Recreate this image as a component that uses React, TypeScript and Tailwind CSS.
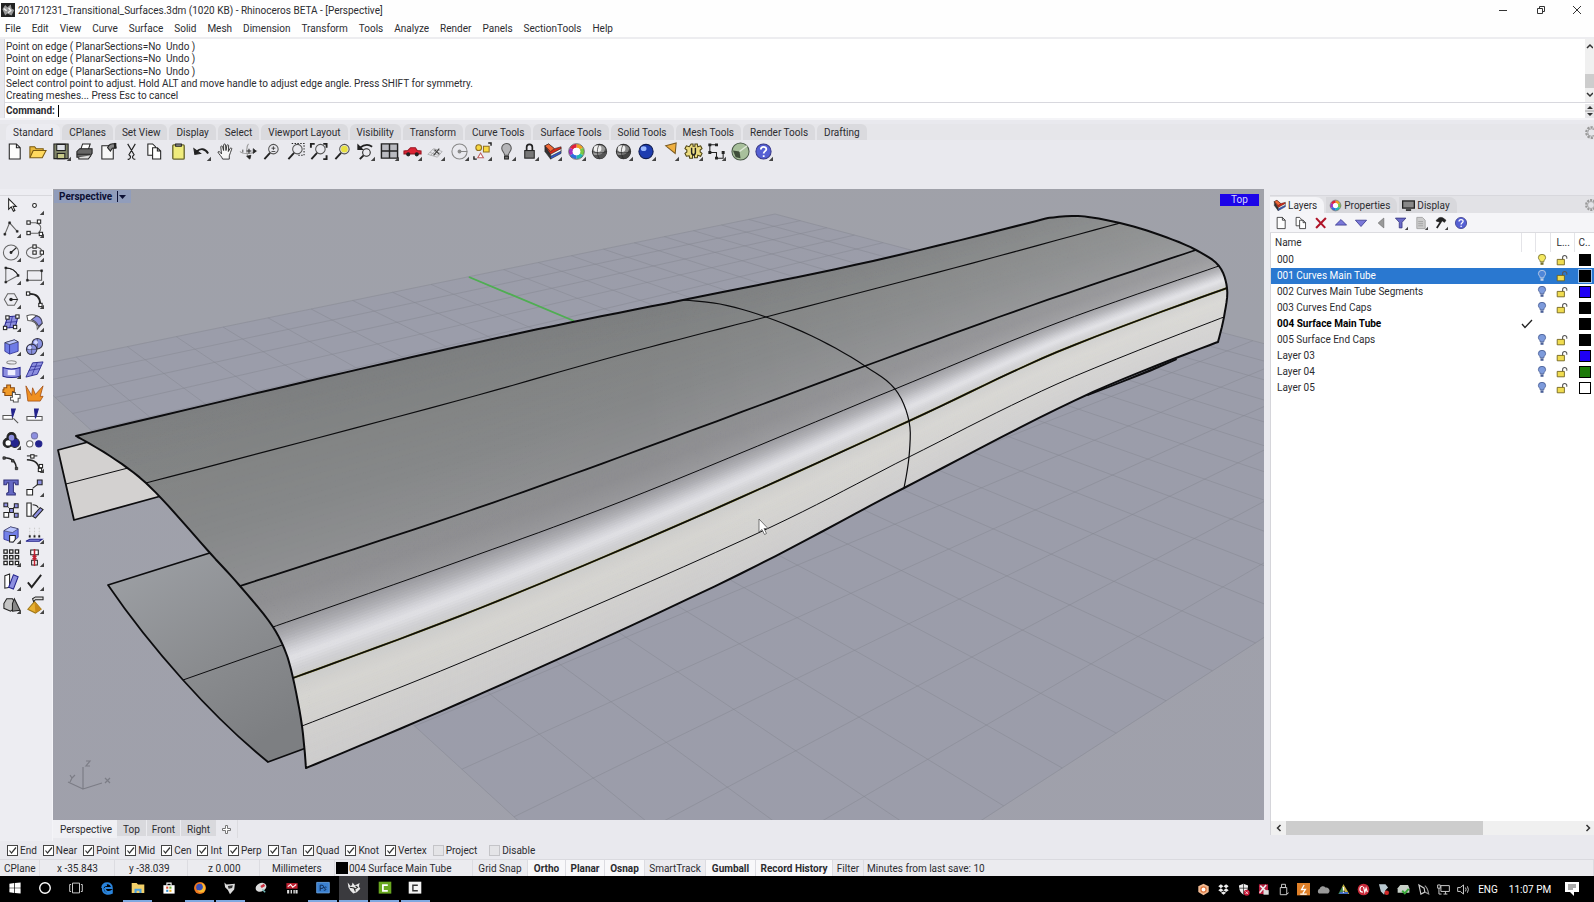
import React from "react";

type Pt = [number, number];
type IconDef = { name: string; art: React.ReactNode; fly?: boolean };

const K = "#222";
const BL = "#8d8fe0";
const DB = "#23238c";

function Icon({ art, fly, size = 20 }: { art: React.ReactNode; fly?: boolean; size?: number }) {
  return (
    <svg width={size} height={size} viewBox="0 0 20 20" fill="none" stroke={K} strokeWidth="1.1" aria-hidden="true">
      {art}
      {fly && <path d="M20 15.5V20h-4.500z" fill="#444" stroke="none" />}
    </svg>
  );
}

const sheet = <path d="M4.500 2h7.500l4 4v12H4.500zM12 2v4h4" fill="#fdfdfd" />;
const copies = (
  <>
    <path d="M3 2h5l3 3v9H3z" fill="#fff" />
    <path d="M8 6h5l3.500 3.500V18H8zM13 6v3.500h3.500" fill="#fff" />
  </>
);
const colorWheel = (
  <g strokeWidth="4">
    <path d="M10 4a6 6 0 0 1 5.200 3" stroke="#f0a020" />
    <path d="M15.200 7a6 6 0 0 1 0 6" stroke="#7ac943" />
    <path d="M15.200 13A6 6 0 0 1 10 16" stroke="#20b8b0" />
    <path d="M10 16a6 6 0 0 1-5.200-3" stroke="#2f6fe0" />
    <path d="M4.800 13a6 6 0 0 1 0-6" stroke="#a030c0" />
    <path d="M4.800 7A6 6 0 0 1 10 4" stroke="#e0203a" />
    <circle cx="10" cy="10" r="8.300" stroke="#444" strokeWidth=".7" />
    <circle cx="10" cy="10" r="4" fill="#fff" stroke="none" />
  </g>
);
const layersArt = (
  <g strokeWidth="0.600">
    <path d="M2 4v6l6 8v-5z" fill="#333" />
    <path d="M8 14l11-5v3L8 18z" fill="#3058c8" />
    <path d="M8 12l11-6v3.500L8 15z" fill="#fff" />
    <path d="M2 4l4-2 6 5 7-2v2L8 13z" fill="#d82818" />
    <path d="M2 4l4-2 6 5-4 3z" fill="#f06a38" />
  </g>
);
const helpArt = (
  <>
    <circle cx="10" cy="10" r="8" fill="#5560d4" stroke="#3a3a8a" />
    <path d="M7.200 8c0-4 5.800-3.600 5.800-.4 0 2-2.800 2-2.800 4.400M10.200 14v1.800" stroke="#fff" strokeWidth="1.900" />
  </>
);
const magnifier = (
  <>
    <circle cx="12" cy="7.500" r="5" stroke="#555" />
    <path d="M8.500 11.500L2.500 18" strokeWidth="2" />
  </>
);

const sphere = (dark: string, light: string) => (
  <>
    <circle cx="10" cy="10" r="7.500" fill={light} stroke="#333" />
    <path d="M10 17.500a7.500 7.500 0 0 0 6-12c0 6-5 9-12.500 8a7.500 7.500 0 0 0 6.500 4z" fill={dark} stroke="none" />
    <ellipse cx="8" cy="7" rx="4" ry="3.500" fill="#fff" opacity=".85" stroke="none" />
    <path d="M10 2.500c-3 4-3 11 0 15M2.500 10c4 2 11 2 15 0" strokeWidth=".7" />
  </>
);

const toolbar: IconDef[] = [
  { name: "New", art: sheet },
  {
    name: "Open",
    art: (
      <>
        <path d="M2 16V5h5l1.500 2H16v3" fill="#e9b93c" stroke="#7a5a10" />
        <path d="M2 16.500L5.500 9H19l-4 7.500z" fill="#ffd95e" stroke="#7a5a10" />
      </>
    ),
  },
  {
    name: "Save",
    fly: true,
    art: (
      <>
        <path d="M2 2h15v15.500H2z" fill="#7f8468" />
        <path d="M5 2.500h9V9H5z" fill="#dfe2e8" />
        <path d="M5.500 12h8v5.500h-8z" fill="#c8cb8a" />
      </>
    ),
  },
  {
    name: "Print",
    art: (
      <>
        <path d="M6 8l2-6h8l-2 6" fill="#fff" />
        <path d="M2 10l3-3h13v5l-3 4H2z" fill="#666" />
        <path d="M2 13h14M4 16v2h10l3-4" fill="#ddd" />
      </>
    ),
  },
  {
    name: "Document properties",
    art: (
      <>
        <path d="M3 4h12v14H3z" fill="#f8f8f8" />
        <path d="M9 6c2-5 5-4 8-4l1 4-4 .5-2 3z" fill="#888" />
        <path d="M17 1v6" strokeWidth="2.500" />
      </>
    ),
  },
  { name: "Cut", art: <path d="M6 2l7 12M14 2L7 14M6 18a2 2 0 1 0 1.500-4M14 18a2 2 0 1 1-1.500-4" strokeWidth="1.200" /> },
  { name: "Copy", art: copies },
  {
    name: "Paste",
    art: (
      <>
        <rect x="4" y="3" width="12" height="15" rx="1" fill="#f0ec7c" stroke="#66642c" strokeWidth="1.400" />
        <path d="M7 4.500V2h6v2.500z" fill="#999" />
      </>
    ),
  },
  { name: "Undo", fly: true, art: <><path d="M5 10c4-4 9-3 12 2" strokeWidth="2" /><path d="M2 7l1 6 6-1z" fill={K} /></> },
  {
    name: "Pan",
    art: (
      <path
        d="M7 18c-1-3-4-5-5-7.500 1-1.200 2.300 0 3.800 2L5 5c.3-1.200 1.700-1 2 .2L8 9V3c.3-1.200 1.900-1.200 2 0l.5 6 1-5.500c.4-1 1.800-.8 1.800.4L13 10l2-3.500c.8-.8 1.900 0 1.500 1-1 3-1.500 4-2.500 7V18z"
        fill="#f6f6f6"
        strokeWidth=".9"
      />
    ),
  },
  {
    name: "Rotate view",
    art: (
      <>
        <path d="M1 10c3 3 14 3 18-1M10 2c-3 3-2 13 1 16" stroke="#999" />
        <path d="M4 8v3M15 7l3 2.500-3 2.500zM8 15l3.500 3 1-4z" fill={K} strokeWidth=".8" />
        <path d="M8 9.500h5M10.500 7v5" />
      </>
    ),
  },
  { name: "Zoom dynamic", art: <>{magnifier}<path d="M10 6.500h4M12 4.500v4M10 10h4" strokeWidth=".8" /></> },
  { name: "Zoom window", art: <>{magnifier}<path d="M6 1.500h13V14h-6" strokeDasharray="1.500 1.500" /></> },
  { name: "Zoom extents", art: <>{magnifier}<path d="M2 6V2h4M15 2h3.500v4M18.500 14v4H15" strokeWidth="2" /></> },
  {
    name: "Zoom selected",
    art: (
      <>
        {magnifier}
        <circle cx="12" cy="7.500" r="3.500" fill="#e8e040" stroke="none" />
      </>
    ),
  },
  {
    name: "Undo view change",
    fly: true,
    art: (
      <>
        <circle cx="11" cy="11" r="4" />
        <path d="M8 14l-4 4" strokeWidth="2" />
        <path d="M4 6c4-3 9-4 13-1" strokeWidth="1.800" />
        <path d="M2 3v5h5z" fill={K} />
      </>
    ),
  },
  {
    name: "Four viewports",
    fly: true,
    art: <path d="M1.500 2h17v15h-17zM10 2v15M1.500 9.500h17" fill="#b9bac0" strokeWidth="1.500" />,
  },
  {
    name: "Named views",
    fly: true,
    art: (
      <>
        <path d="M1 12.500V9.500L5 9l3-3h5l2 3 4 .5v3z" fill="#dc2434" stroke="#9a1824" />
        <circle cx="5.500" cy="13" r="1.600" fill={K} />
        <circle cx="14.500" cy="13" r="1.600" fill={K} />
      </>
    ),
  },
  {
    name: "Construction planes",
    fly: true,
    art: (
      <g stroke="#999">
        <path d="M2 13l6-6 9 3-5 6zM4 11l9 3M7 8l8 4M5 14l6-6" strokeWidth=".7" />
        <path d="M8 14l6-7M9 8l5 5" stroke="#444" strokeWidth="1.300" />
      </g>
    ),
  },
  {
    name: "Object snap",
    fly: true,
    art: (
      <g stroke="#888">
        <circle cx="10" cy="10" r="8" />
        <path d="M10 10h8" />
        <circle cx="10" cy="10" r="1.500" fill="#888" />
      </g>
    ),
  },
  {
    name: "Select objects",
    fly: true,
    art: (
      <>
        <circle cx="6" cy="6" r="3" fill="#f8d840" stroke="#907020" />
        <path d="M11 4.500h6v6h-6z" fill="#f8d840" stroke="#907020" />
        <path d="M8 11.500l3 5H5z" fill="#fff" stroke="#c06060" />
        <path d="M16 1h3v3M1 15v3h3" strokeWidth="1.500" />
      </>
    ),
  },
  {
    name: "Hide objects",
    fly: true,
    art: (
      <>
        <path d="M8 14c0-3-3-4-3-7.500a5 5 0 0 1 10 0C15 10 12 11 12 14z" fill="#b5b5b8" stroke="#555" />
        <path d="M8 15h4v3H8z" fill="#777" />
      </>
    ),
  },
  {
    name: "Lock objects",
    fly: true,
    art: (
      <>
        <path d="M7 9V5.500a3 3 0 0 1 6 0V9" strokeWidth="1.800" />
        <rect x="5" y="9" width="10" height="8" fill="#777" />
      </>
    ),
  },
  { name: "Layers", fly: true, art: layersArt },
  { name: "Object properties", fly: true, art: colorWheel },
  { name: "Shaded display", art: sphere("#555", "#999") },
  { name: "Render", fly: true, art: sphere("#444", "#888") },
  {
    name: "Render preview",
    fly: true,
    art: (
      <>
        <circle cx="9.500" cy="10" r="7.500" fill="#1d3cb0" stroke="#101c50" />
        <ellipse cx="7" cy="7" rx="3" ry="2.500" fill="#9ab8ff" stroke="none" />
      </>
    ),
  },
  { name: "Spotlight", fly: true, art: <path d="M6 4l11-3-1 11z" fill="#f0b040" stroke="#7a5a20" /> },
  {
    name: "Options",
    fly: true,
    art: (
      <>
        <path
          d="M7.500 2h2v2.500h2V2h2.500l.5 3 3-1 1.500 3-2 1.500v2l2 1.500-1.500 3-3-1-.5 2.500h-3v-2.500h-2V17H6l-.5-2.500-3 .5L1 12l2-1.500v-2L1 7l1.500-3 3 1z"
          fill="#ecdc80"
          stroke="#4a4010"
        />
        <path d="M8 6v5c0 3 4 3 4 0V6" strokeWidth="1.500" />
      </>
    ),
  },
  {
    name: "Record history",
    fly: true,
    art: (
      <>
        <path d="M3 3h7M3 3v8h7v6h7v-5" />
        <path d="M2 2h2v2H2zM9 2h2v2H9zM2 10h2v2H2zM9 16h2v2H9zM16 10h2v2h-2z" fill={K} />
      </>
    ),
  },
  {
    name: "Grasshopper",
    art: (
      <>
        <circle cx="10" cy="10" r="9" fill="#a8c09c" stroke="#4a5a48" />
        <path d="M2 9l7 1 1 7-5-1z" fill="#3f4e3a" stroke="none" />
        <path d="M9 10l8-6" stroke="#dfe8d8" strokeWidth="1.500" />
      </>
    ),
  },
  { name: "Help topics", fly: true, art: helpArt },
];

const sq = (x: number, y: number, f = "#fff") => <rect x={x} y={y} width="3.500" height="3.500" fill={f} />;

const sideTools: IconDef[] = [
  { name: "Select", art: <path d="M7 3v11l2.700-2.500L12 16l1.600-.8-2-4.300H15z" fill="#fff" /> },
  { name: "Point", fly: true, art: <circle cx="10" cy="10" r="2" fill="#fff" /> },
  { name: "Polyline", fly: true, art: <><path d="M3 16L8 4l8 9" stroke="#666" /><path d="M2 15h2v2H2zM7 3h2v2H7zM15 12h2v2h-2z" fill={K} strokeWidth=".5" /></> },
  { name: "Curve", fly: true, art: <><path d="M4 4h7c8 2 6 8 3 11H4" stroke="#666" />{sq(2, 2)}{sq(13, 1)}{sq(2, 13)}{sq(15, 14)}</> },
  { name: "Circle", fly: true, art: <><circle cx="9.500" cy="10" r="8" stroke="#666" /><path d="M9.500 10l5.500-5" /><circle cx="9.500" cy="10" r="1" fill={K} /></> },
  { name: "Ellipse", fly: true, art: <><ellipse cx="10" cy="10" rx="8.500" ry="6" stroke="#666" />{sq(8.3, 2)}{sq(8.3, 8.3)}{sq(16, 8.3)}</> },
  { name: "Arc", fly: true, art: <><path d="M4 2v15l13-7C14 4 9 2 4 2z" stroke="#666" /><path d="M4 2c5 0 10 2 13 8" /><path d="M3 1h2v2H3zM16 9h2v2h-2zM3 16h2v2H3z" fill={K} strokeWidth=".5" /></> },
  { name: "Rectangle", fly: true, art: <><path d="M2.500 5h15v10h-15z" stroke="#555" /><path d="M1.500 14h2v2h-2zM16.500 4h2v2h-2z" fill={K} strokeWidth=".5" /></> },
  { name: "Polygon", fly: true, art: <><path d="M2.500 10L6 4h7l3.500 6L13 16H6z" stroke="#666" /><path d="M9.500 10h7" /><circle cx="9.500" cy="10" r="1.300" fill={K} /></> },
  { name: "Fillet curves", fly: true, art: <><path d="M5 4c8 0 11 4 11 11" strokeWidth="1.800" />{sq(1.5, 2)}{sq(14.5, 14)}</> },
  { name: "Surface from points", fly: true, art: <><path d="M6 4l11-1-3 12-12 1z" fill={BL} stroke={DB} /><path d="M4 10l12-1M11 3.500L8 16" stroke={DB} strokeWidth=".7" />{sq(4, 3)}{sq(14.5, 2)}{sq(1.5, 14)}{sq(12, 13)}</> },
  { name: "Sweep", fly: true, art: <><path d="M2 3c7-3 15 0 16 8l-5 6c0-6-4-9-10-9z" fill="#fff" stroke="#555" /><path d="M7 7l5-4c4 1 6 4 6 8l-4 3c-1-3-3-6-7-7z" fill={BL} stroke="#445" /></> },
  { name: "Box", fly: true, art: <><path d="M3 6l10-3 4 2v10l-9 3-5-3z" fill="#6f7ce6" stroke={DB} strokeWidth=".8" /><path d="M3 6l5 2 9-3-4-2z" fill="#b9c4ff" strokeWidth=".6" /><path d="M8 8v10" stroke={DB} strokeWidth=".8" /></> },
  { name: "Boolean union", fly: true, art: <g fill="#8a92e0" stroke="#334"><circle cx="13" cy="7" r="5.500" /><circle cx="7" cy="13" r="5.500" /><path d="M7 7.500v11M1.500 13h11M13 2v10" strokeWidth=".6" /><circle cx="11.500" cy="5.500" r="2" fill="#d4daff" stroke="none" /><circle cx="5" cy="11" r="2" fill="#d4daff" stroke="none" /></g> },
  { name: "Revolve", fly: true, art: <><ellipse cx="10" cy="2.500" rx="5" ry="1.800" stroke="#888" /><path d="M1 8c5 2 13 2 18 0v9c-5 2-13 2-18 0z" fill={BL} stroke={DB} /><path d="M6 10.500h8V16H6z" fill="#eef" stroke="none" /></> },
  { name: "Surface grid", fly: true, art: <><path d="M8 3l11-1-6 13-12 3z" fill={BL} stroke={DB} strokeWidth=".9" /><path d="M4 11l12-2M13 2.500L7 16.500M6 7l11-1" stroke={DB} strokeWidth=".7" /></> },
  { name: "Join", art: <><path d="M2 4h3V1h4v3h4v4h-2v4H3V9H1V6h1z" fill="#f09a28" stroke="#8a4a10" /><path d="M11 9h3v2h5v4h-2v4h-5v-2H9v-3h2z" fill="#fff" stroke="#555" /></> },
  { name: "Explode", art: <path d="M1 2l6 10 1-8 3 7 8-9-3 11h3l-3 5H3z" fill="#f09020" stroke="#a04a10" strokeWidth=".8" /> },
  { name: "Trim", art: <><path d="M1 9h10v4H1zM12 12l5 5" fill="#fff" stroke="#555" /><path d="M10 2h4l-3 9z" fill={DB} stroke={DB} /></> },
  { name: "Split", art: <><path d="M2 10h16v4H2z" fill="#fff" stroke="#555" /><path d="M10 2h4l-3 10z" fill={DB} stroke={DB} /></> },
  { name: "Group", fly: true, art: <><circle cx="10" cy="6.500" r="4.800" fill={K} /><circle cx="6" cy="12.500" r="4.800" fill={K} /><circle cx="13.500" cy="12.500" r="4.800" fill={DB} /><circle cx="10" cy="7" r="3" fill={BL} stroke="none" /><circle cx="6.500" cy="12.500" r="2.800" fill="#fff" stroke="none" /></> },
  { name: "Ungroup", art: <><circle cx="10" cy="5" r="3.300" fill={BL} stroke="#77a" /><circle cx="5" cy="13.500" r="3.300" fill="#fff" stroke="#666" /><circle cx="14.500" cy="13.500" r="3.300" fill={DB} stroke={DB} /></> },
  { name: "Edit points", art: <><path d="M2 4c9 0 13 4 13 12" strokeWidth="1.500" /><path d="M1 3h2.500v2.500H1zM10 6h2.500v2.500H10zM14 14h2.500v2.500H14z" fill="#555" strokeWidth=".8" /></> },
  { name: "Handle editor", fly: true, art: <><path d="M2 6c9 0 13 4 13 12" strokeWidth="1.500" /><path d="M2 2h11" />{sq(6, 0.8)}{sq(15, 11)}{sq(14, 15)}</> },
  { name: "Text", art: <path d="M2 2h15v5h-2.500l-1-2H12v10l2 1v2H5v-2l2-1V5H5.500l-1 2H2z" fill="#6468c4" stroke="#33337a" /> },
  { name: "Move", fly: true, art: <><path d="M2 12h6v6H2z" fill="#fff" /><path d="M13 2h5v5h-5z" fill={BL} /><path d="M8 11l5-4" /></> },
  { name: "Copy objects", art: <><path d="M4 4l10 10M14 5L5 14" strokeWidth=".7" /><path d="M2 2h4v4H2zM13 3h4v4h-4zM8 8h4v4H8zM13 13h4v4h-4z" fill={BL} /><path d="M2 12h5v5H2z" fill="#fff" /></> },
  { name: "Rotate", art: <><path d="M2 2h4.500v14H2z" fill="#fff" /><path d="M16 7l3 2-8 9-3-2z" fill={BL} /><path d="M8 4c3 0 5 1 6 3" /></> },
  { name: "Solid fillet", fly: true, art: <><path d="M2 6l7-4 8 2v9l-6 5-9-3z" fill="#7380e8" stroke={DB} strokeWidth=".8" /><path d="M2 6l7-4 8 2-6 4z" fill="#b9c4ff" strokeWidth=".5" /><path d="M8 11h6v4l-2 3H8z" fill="#fff" /></> },
  { name: "Project", fly: true, art: <><path d="M5 3v9M10 3v9M15 3v9" stroke="#ccc" strokeDasharray="1.500 1.500" /><path d="M4 12h2M9 12h2M14 12h2" strokeWidth="2.500" /><path d="M1 17l4-2h13l-3 2z" fill={BL} stroke={DB} /></> },
  { name: "Array", fly: true, art: <>{[2, 8, 14].map((y) => [2, 8, 14].map((x) => <rect key={`${x}-${y}`} x={x} y={y} width="3.500" height="3.500" fill="#fff" strokeWidth="1.300" />))}</> },
  { name: "Mirror", fly: true, art: <><path d="M6 2h8v5H6zM7 13h6v5H7z" fill="#fff" /><path d="M10 1v18M8 8l4 4M12 8l-4 4" stroke="#c02030" strokeWidth="1.600" /></> },
  { name: "Layout", fly: true, art: <><path d="M3 4l5-2v14l-5 1z" fill="#fff" /><path d="M12 3l5 2-5 13-5-2z" fill={BL} stroke={DB} /></> },
  { name: "Check", fly: true, art: <path d="M3 11l4 5L17 3" strokeWidth="2" /> },
  { name: "Solids", fly: true, art: <><path d="M2 9l3-5h6l2 3v7l-4 3-7-3z" fill="#c4c4c4" /><path d="M13 4l6 12-8 1V9z" fill="#888" /></> },
  { name: "Analyze", fly: true, art: <><path d="M3 15l7-8 7 8-6 4z" fill="#e8b030" stroke="#a07818" /><path d="M10 7l1 12 6-4z" fill="#c88a18" stroke="none" /><path d="M8 4l3-2h8v3h-8l-2 2z" fill="#ddd" /></> },
];

const menus = ["File", "Edit", "View", "Curve", "Surface", "Solid", "Mesh", "Dimension", "Transform", "Tools", "Analyze", "Render", "Panels", "SectionTools", "Help"];
const toolTabs = ["Standard", "CPlanes", "Set View", "Display", "Select", "Viewport Layout", "Visibility", "Transform", "Curve Tools", "Surface Tools", "Solid Tools", "Mesh Tools", "Render Tools", "Drafting"];
const history = [
  "Point on edge ( PlanarSections=No  Undo )",
  "Point on edge ( PlanarSections=No  Undo )",
  "Point on edge ( PlanarSections=No  Undo )",
  "Select control point to adjust. Hold ALT and move handle to adjust edge angle. Press SHIFT for symmetry.",
  "Creating meshes... Press Esc to cancel",
];

/* ---------- Perspective viewport ---------- */

const isoCurves: Pt[][] = [
  [[76, 436], [300, 383], [520, 333], [683, 300], [873, 261], [1048, 218]],
  [[146, 483], [460, 400], [620, 355], [766, 317], [954, 268], [1120, 223]],
  [[240, 586], [460, 514], [620, 457], [865, 366], [1030, 306], [1196, 250]],
  [[273, 627], [460, 561], [620, 502], [895, 389], [1057, 323], [1219, 266]],
  [[293, 678], [460, 616], [669, 529], [909, 421], [1057, 352], [1227, 288]],
  [[302, 726], [460, 663], [771, 527], [909, 457], [1057, 384], [1224, 317]],
  [[306, 768], [460, 703], [740, 574], [904, 488], [1093, 392], [1218, 342]],
];

function smooth(points: Pt[], steps = 10): Pt[] {
  const out: Pt[] = [];
  for (let i = 0; i < points.length - 1; i++) {
    const p0 = points[Math.max(0, i - 1)];
    const p1 = points[i];
    const p2 = points[i + 1];
    const p3 = points[Math.min(points.length - 1, i + 2)];
    const d = (a: Pt, b: Pt) => Math.sqrt(Math.hypot(a[0] - b[0], a[1] - b[1])) || 1e-3;
    const t1 = d(p0, p1);
    const t2 = t1 + d(p1, p2);
    const t3 = t2 + d(p2, p3);
    for (let s = 0; s < steps; s++) {
      const t = t1 + ((t2 - t1) * s) / steps;
      const c = (k: 0 | 1) => {
        const a1 = ((t1 - t) * p0[k] + t * p1[k]) / t1;
        const a2 = ((t2 - t) * p1[k] + (t - t1) * p2[k]) / (t2 - t1);
        const a3 = ((t3 - t) * p2[k] + (t - t2) * p3[k]) / (t3 - t2);
        const b1 = ((t2 - t) * a1 + t * a2) / t2;
        const b2 = ((t3 - t) * a2 + (t - t1) * a3) / (t3 - t1);
        return ((t2 - t) * b1 + (t - t1) * b2) / (t2 - t1);
      };
      out.push([c(0), c(1)]);
    }
  }
  out.push(points[points.length - 1]);
  return out;
}

const curves = isoCurves.map((c) => smooth(c));
const toPath = (p: Pt[]) => "M" + p.map(([x, y]) => `${x.toFixed(1)} ${y.toFixed(1)}`).join("L");

const extend = (p: Pt[]): Pt[] => {
  const a = p[0];
  const b = p[1];
  const y = p[p.length - 2];
  const z = p[p.length - 1];
  return [[a[0] - (b[0] - a[0]), a[1] - (b[1] - a[1])], ...p, [z[0] + 2 * (z[0] - y[0]), z[1] + 2 * (z[1] - y[1])]];
};

const shade: [number, number[]][] = [
  [0, [122, 124, 125]],
  [1, [127, 129, 129]],
  [1.5, [131, 133, 134]],
  [2, [139, 140, 142]],
  [2.5, [140, 140, 143]],
  [3, [150, 150, 154]],
  [3.25, [174, 174, 179]],
  [3.5, [210, 210, 215]],
  [3.65, [224, 224, 228]],
  [3.85, [208, 208, 211]],
  [4, [203, 203, 202]],
  [4.4, [213, 212, 208]],
  [5, [209, 208, 206]],
  [6, [204, 203, 203]],
];

function shadeAt(v: number) {
  let i = 0;
  while (i < shade.length - 2 && v > shade[i + 1][0]) i++;
  const [a, ca] = shade[i];
  const [b, cb] = shade[i + 1];
  const f = (v - a) / (b - a);
  return `rgb(${ca.map((c, k) => Math.round(c + (cb[k] - c) * f)).join(",")})`;
}

const strips = (() => {
  const out: { d: string; fill: string }[] = [];
  const n = 20;
  const wide = curves.map(extend);
  for (let k = 0; k < 6; k++) {
    for (let s = 0; s < n; s++) {
      const row = (f: number): Pt[] =>
        wide[k].map((p, i): Pt => [p[0] + (wide[k + 1][i][0] - p[0]) * f, p[1] + (wide[k + 1][i][1] - p[1]) * f]);
      out.push({ d: toPath([...row(s / n), ...row((s + 1) / n).reverse()]) + "Z", fill: shadeAt(k + (s + 0.5) / n) });
    }
  }
  return out;
})();

const gridPath = (() => {
  const [p0, p1, p2, p3]: Pt[] = [[23, 368], [775, 214], [1586, 429], [710, 996]];
  const dx1 = p1[0] - p2[0], dx2 = p3[0] - p2[0], sx = p0[0] - p1[0] + p2[0] - p3[0];
  const dy1 = p1[1] - p2[1], dy2 = p3[1] - p2[1], sy = p0[1] - p1[1] + p2[1] - p3[1];
  const den = dx1 * dy2 - dx2 * dy1;
  const g = (sx * dy2 - dx2 * sy) / den;
  const h = (dx1 * sy - sx * dy1) / den;
  const map = (u: number, v: number) => {
    const w = g * u + h * v + 1;
    const x = ((p1[0] - p0[0] + g * p1[0]) * u + (p3[0] - p0[0] + h * p3[0]) * v + p0[0]) / w;
    const y = ((p1[1] - p0[1] + g * p1[1]) * u + (p3[1] - p0[1] + h * p3[1]) * v + p0[1]) / w;
    return `${x.toFixed(1)} ${y.toFixed(1)}`;
  };
  let d = "";
  for (let i = 0; i <= 20; i++) d += `M${map(i / 20, 0)}L${map(i / 20, 1)}M${map(0, i / 20)}L${map(1, i / 20)}`;
  return d;
})();

const frontProfile = smooth([[76, 436], [110, 456], [146, 483], [210, 553], [240, 586], [273, 627], [286, 653], [293, 678], [302, 726], [306, 768]], 6);
const rearProfile = smooth([[1048, 218], [1078, 216], [1120, 223], [1160, 235], [1196, 250], [1219, 266], [1227, 288], [1224, 317], [1218, 342]], 6);
const section = smooth([[683, 300], [720, 304], [766, 317], [820, 340], [865, 366], [895, 389], [909, 421], [909, 457], [904, 488]], 6);
const outline = toPath([...curves[0], ...rearProfile, ...[...curves[6]].reverse(), ...[...frontProfile].reverse()]) + "Z";

function Scene() {
  return (
    <svg className="block h-full w-full" viewBox="53 189 1211 631" preserveAspectRatio="xMidYMid slice" role="img" aria-label="Perspective view of the main tube surface">
      <defs>
        <linearGradient id="sky" x1="0" y1="0" x2="0" y2="1">
          <stop offset="0" stopColor="#a1a1a6" />
          <stop offset=".3" stopColor="#9fa1aa" />
          <stop offset="1" stopColor="#a0a0ac" />
        </linearGradient>
        <linearGradient id="flap" x1="0" y1="0" x2=".6" y2="1">
          <stop offset="0" stopColor="#9fa2a7" />
          <stop offset=".6" stopColor="#8a8c8f" />
          <stop offset="1" stopColor="#7d7f82" />
        </linearGradient>
        <linearGradient id="far" x1="0" y1="0" x2="1" y2="0">
          <stop offset="0" stopColor="#fff" stopOpacity=".03" />
          <stop offset=".5" stopColor="#fff" stopOpacity=".02" />
          <stop offset="1" stopColor="#fff" stopOpacity=".14" />
        </linearGradient>
        <clipPath id="tube">
          <path d={outline} />
        </clipPath>
      </defs>
      <path d="M-400-100h2100v1400H-400z" fill="url(#sky)" />
      <path d="M23 368L775 214 1586 429 710 996z" fill="#9799a9" fillOpacity=".4" />
      <path d={gridPath} stroke="#858792" strokeOpacity=".5" strokeWidth="1" fill="none" />
      <path d="M469 277L574 321" stroke="#4fae52" strokeWidth="1.800" />
      <g stroke="#0c0c0e" strokeWidth="1.800" strokeLinejoin="round">
        <path d="M92 441L58 450 74 520 161 496 170 479z" fill="#d3d1d0" />
        <path d="M66 484L128 468" strokeWidth="1" />
        <path d="M216 551L108 585Q140 632 183 680T268 762L306 748 310 690 290 620z" fill="url(#flap)" />
        <path d="M183 680L285 644" strokeWidth="1" />
        <path d="M1088 395L1120 382.500 1176 359.500 1150 371z" fill="#0c0c0e" />
      </g>
      <g clipPath="url(#tube)">
        {strips.map((s, i) => (
          <path key={i} d={s.d} fill={s.fill} stroke={s.fill} strokeWidth="1" />
        ))}
        <path d={outline} fill="url(#far)" />
      </g>
      <g fill="none" stroke="#0c0c0e" strokeLinejoin="round">
        <path d={toPath(curves[1])} strokeWidth="1.100" />
        <path d={toPath(curves[2])} strokeWidth="1.800" />
        <path d={toPath(curves[3])} strokeWidth="1" />
        <path d={toPath(curves[4])} stroke="#6e6a10" strokeWidth="2" />
        <path d={toPath(curves[4])} strokeWidth="1.500" />
        <path d={toPath(curves[5])} strokeWidth="1" />
        <path d={toPath(section)} strokeWidth="1.200" />
        <path d={outline} strokeWidth="2" />
      </g>
      <g stroke="#7c7d86" strokeWidth="1.200" fill="none">
        <path d="M83 767v22l19-6M83 789l-15-7" />
        <path d="M86 761h4l-4 5h4M105 778l5 5M110 778l-5 5M70 775l2 3 3-3M72 778l-2 4" />
      </g>
      <path d="M759 519v13l3-2.500 2.500 5 2-1-2.500-5h4z" fill="#fff" stroke="#555" strokeWidth=".8" />
    </svg>
  );
}

/* ---------- Layers panel ---------- */

type Layer = { name: string; color: string; on?: boolean; selected?: boolean; current?: boolean };
const layers: Layer[] = [
  { name: "000", color: "bg-black", on: true },
  { name: "001 Curves Main Tube", color: "bg-black", selected: true },
  { name: "002 Curves Main Tube Segments", color: "bg-[#1f00f5]" },
  { name: "003 Curves End Caps", color: "bg-black" },
  { name: "004 Surface Main Tube", color: "bg-black", current: true },
  { name: "005 Surface End Caps", color: "bg-black" },
  { name: "Layer 03", color: "bg-[#1f00f5]" },
  { name: "Layer 04", color: "bg-[#1c7a08]" },
  { name: "Layer 05", color: "bg-white" },
];

const layerTools: IconDef[] = [
  { name: "New layer", art: sheet },
  { name: "New sublayer", art: copies },
  { name: "Delete layer", art: <path d="M3 3l13 14M17 3L3 17" stroke="#b01428" strokeWidth="3" /> },
  { name: "Move up", art: <path d="M2 13l8-8 8 8z" fill="#7a78d8" stroke="#33338c" /> },
  { name: "Move down", art: <path d="M2 6l8 9 8-9z" fill="#7a78d8" stroke="#33338c" /> },
  { name: "Move to parent", art: <path d="M14 3v14l-8-7z" fill="#999" stroke="#777" /> },
  { name: "Filter", fly: true, art: <path d="M2 3h15l-5.500 6v8h-4V9z" fill="#6a6ac8" stroke="#33337c" /> },
  { name: "Layer state", fly: true, art: <path d="M4 2h8l4 4v12H4zM6 8h7M6 11h7M6 14h7" fill="#ccc" stroke="#999" /> },
  { name: "Tools", fly: true, art: <><path d="M3 7c3-5 7-6 10-4l4 3-2 3-3-2-3 2z" fill={K} /><path d="M10 8l-6 9" strokeWidth="2.500" /></> },
  { name: "Layer help", art: helpArt },
];

const bulbArt = (fill: string, line: string) => (
  <>
    <path d="M7 13c0-3-3-4-3-7a6 5.500 0 0 1 12 0c0 3-3 4-3 7z" fill={fill} stroke={line} strokeWidth="1.500" />
    <path d="M7.500 14h5v4h-5z" fill={line} stroke="none" />
  </>
);
const lockArt = (
  <>
    <path d="M11 9V6a3.500 3.500 0 0 1 7 0v2" stroke="#555" strokeWidth="1.800" />
    <path d="M2 9h12v9H2z" fill="#f0dc50" stroke="#6a5c18" strokeWidth="1.400" />
  </>
);

const panelTabs = [
  { name: "Layers", art: layersArt },
  { name: "Properties", art: colorWheel },
  { name: "Display", art: <><rect x="1" y="3" width="18" height="11" fill="#888" strokeWidth="2" /><path d="M6 17h8" strokeWidth="2.500" /></> },
];

const gearArt = (
  <g stroke="#999">
    <circle cx="10" cy="10" r="7" strokeWidth="3" strokeDasharray="3 1.400" />
    <circle cx="10" cy="10" r="5" />
  </g>
);

function LayersPanel() {
  return (
    <aside className="flex w-[324px] shrink-0 flex-col pt-[6px] pb-[6px]" aria-label="Layers">
      <div className="flex h-[18px] items-end border-t border-[#d8d8dd] bg-[#e2e2e6]">
        {panelTabs.map((t, i) => (
          <button key={t.name} className={`flex h-[16px] items-center gap-[2px] rounded-tr-[8px] pr-[7px] pl-[3px] ${i === 0 ? "bg-[#f4f4f7]" : "bg-[#d8d8dc]"} mr-[2px]`}>
            <Icon art={t.art} size={13} />
            {t.name}
          </button>
        ))}
        <button className="ml-auto h-4 w-[10px] overflow-hidden" aria-label="Panel options">
          <Icon art={gearArt} size={14} />
        </button>
      </div>
      <div className="flex h-[20px] items-center gap-[6px] border-b border-[#dcdce0] bg-[#f5f5f8] pl-[4px]">
        {layerTools.map((t) => (
          <button key={t.name} aria-label={t.name} className="w-[14px]">
            <Icon art={t.art} fly={t.fly} size={14} />
          </button>
        ))}
      </div>
      <div className="flex-1 overflow-hidden border-l border-[#d5d5da] bg-white">
        <table className="w-full table-fixed border-collapse leading-[16px]">
          <colgroup>
            <col />
            <col className="w-[14px]" />
            <col className="w-[15px]" />
            <col className="w-[24px]" />
            <col className="w-[20px]" />
          </colgroup>
          <thead>
            <tr className="h-[19px] text-left">
              <th className="border-r border-[#e4e4e8] p-0 pl-[4px] font-normal">Name</th>
              <th className="border-r border-[#e4e4e8] p-0" />
              <th className="border-r border-[#e4e4e8] p-0" />
              <th className="border-r border-[#e4e4e8] p-0 pl-[6px] font-normal">L...</th>
              <th className="overflow-hidden p-0 pl-[4px] font-normal whitespace-nowrap">C..</th>
            </tr>
          </thead>
          <tbody>
            {layers.map((l) => (
              <tr key={l.name} className={`h-[16px] ${l.selected ? "bg-[#2a78d0] text-white" : ""} ${l.current ? "font-bold text-black" : ""}`}>
                <td className="truncate p-0 pl-[6px]">{l.name}</td>
                <td className="p-0">
                  {l.current && (
                    <svg width="12" height="12" viewBox="0 0 12 12" fill="none" stroke="#222" strokeWidth="1.300" aria-label="Current">
                      <path d="M1 6l3 3.500L11 2" />
                    </svg>
                  )}
                </td>
                <td className="p-0 pl-px">{!l.current && <Icon art={l.on ? bulbArt("#f4e860", "#77702a") : l.selected ? bulbArt("#4f86d8", "#c2cfe6") : bulbArt("#7d9bdc", "#4a5f96")} size={12} />}</td>
                <td className="p-0 pl-[6px]">{!l.current && <Icon art={lockArt} size={12} />}</td>
                <td className="p-0 pl-[5px]">
                  <span className={`block h-[12px] w-[12px] border border-black ${l.selected ? "outline outline-1 outline-[#9fc4ee]" : ""} ${l.color}`} />
                </td>
              </tr>
            ))}
          </tbody>
        </table>
      </div>
      <div className="flex h-[14px] items-stretch border-l border-[#d5d5da] bg-[#f0f0f0]">
        <button aria-label="Scroll left" className="grid w-[15px] place-items-center">
          <svg width="8" height="8" viewBox="0 0 8 8" fill="none" stroke="#333" strokeWidth="1.500"><path d="M5.500 1l-3 3 3 3" /></svg>
        </button>
        <div className="flex-1"><div className="h-full w-2/3 bg-[#cdcdcd]" /></div>
        <button aria-label="Scroll right" className="grid w-[12px] place-items-center">
          <svg width="8" height="8" viewBox="0 0 8 8" fill="none" stroke="#333" strokeWidth="1.500"><path d="M2.500 1l3 3-3 3" /></svg>
        </button>
      </div>
    </aside>
  );
}

/* ---------- Bottom bars ---------- */

const snaps = ["End", "Near", "Point", "Mid", "Cen", "Int", "Perp", "Tan", "Quad", "Knot", "Vertex", "Project", "Disable"];

const panes: { text: string; cls: string; swatch?: boolean }[] = [
  { text: "CPlane", cls: "w-[40px] pl-[4px]" },
  { text: "x -35.843", cls: "w-[75px] pl-[17px]" },
  { text: "y -38.039", cls: "w-[73px] pl-[14px]" },
  { text: "z 0.000", cls: "w-[72px] pl-[20px]" },
  { text: "Millimeters", cls: "w-[75px] pl-[12px]" },
  { text: "004 Surface Main Tube", cls: "w-[138px] pl-px", swatch: true },
  { text: "Grid Snap", cls: "w-[55px] justify-center" },
  { text: "Ortho", cls: "w-[38px] justify-center bg-[#f8f8fa] font-bold" },
  { text: "Planar", cls: "w-[39px] justify-center bg-[#f8f8fa] font-bold" },
  { text: "Osnap", cls: "w-[40px] justify-center bg-[#f8f8fa] font-bold" },
  { text: "SmartTrack", cls: "w-[61px] justify-center" },
  { text: "Gumball", cls: "w-[50px] justify-center bg-[#f8f8fa] font-bold" },
  { text: "Record History", cls: "w-[77px] justify-center bg-[#f8f8fa] font-bold" },
  { text: "Filter", cls: "w-[31px] justify-center" },
  { text: "Minutes from last save: 10", cls: "flex-1 pl-[3px]" },
];

const rhinoArt = (
  <g stroke="none">
    <path d="M1 2l4 5 2-1 1-4 3 4 3-1 4-2-1 5 2 3-5 5-5 2-4-4-3-5z" fill="#e8e8e8" />
    <path d="M4 9l6 1 2 5M12 7l3 2-4 3" fill="none" stroke="#222" strokeWidth="1.500" />
  </g>
);

const taskApps: (IconDef & { open?: boolean; active?: boolean })[] = [
  { name: "Start", art: <path d="M2 4l7-1v6.500H2zM10 2.800L18 2v7.500h-8zM2 10.500h7V17l-7-1zM10 10.500h8V18l-8-.9z" fill="#fff" stroke="none" /> },
  { name: "Cortana", art: <circle cx="10" cy="10" r="7.500" stroke="#fff" strokeWidth="2" /> },
  { name: "Task view", art: <path d="M5 3h10v14H5zM3 5H1v10h2M17 5h2v10h-2" stroke="#ddd" strokeWidth="1.300" /> },
  { name: "Edge", art: <path d="M3 10C4 1 17 1 17 10H7M7 10c0 6 6 7 10 4v3c-6 3-13 1-13-6 0-3 3-5 6-5" stroke="#2a84dc" strokeWidth="2.600" /> },
  { name: "File Explorer", open: true, art: <><path d="M1 3h7l2 2h9v12H1z" fill="#f2cf68" stroke="none" /><path d="M5 17v-6h10v6h-3v-3H8v3z" fill="#4aa0e0" stroke="none" /></> },
  { name: "Store", art: <><path d="M2 6h16v12H2z" fill="#fff" stroke="none" /><path d="M7 6V3h6v3" stroke="#fff" strokeWidth="1.500" /><path d="M6 8h3v3H6z" fill="#e04a30" stroke="none" /><path d="M10.500 8h3v3h-3z" fill="#6ab030" stroke="none" /><path d="M6 12.500h3v3H6z" fill="#3090d8" stroke="none" /><path d="M10.500 12.500h3v3h-3z" fill="#f0b020" stroke="none" /></> },
  { name: "Firefox", open: true, art: <><circle cx="10" cy="10" r="8.500" fill="#f07820" stroke="none" /><circle cx="9.500" cy="9" r="5" fill="#3a50b8" stroke="none" /><path d="M12 2c6 3 7 9 4 13-3 2-8 2-10-2 4 2 9-1 8-6z" fill="#fbbd30" stroke="none" /></> },
  { name: "Rhino 5", open: true, art: <><path d="M2 2l3 3 12-1-1 8-6 7-3-6-4-4z" fill="#ddd" stroke="none" /><path d="M7 7l7-1-1 4-5 1z" fill="#333" stroke="none" /></> },
  { name: "Paint tool", art: <><ellipse cx="10" cy="9" rx="8" ry="6" fill="#ddd" stroke="none" transform="rotate(-25 10 9)" /><path d="M9 7l5-3 2 3-5 3z" fill="#d03040" stroke="none" /><path d="M12 12l4 4" stroke="#70b8b8" strokeWidth="2" /></> },
  { name: "Scanner 2016", art: <><path d="M2 3h16v8H2z" fill="#c02030" stroke="none" /><path d="M3 13h3v5H3zM8 13h2v5H8zM12 13h2v5h-2zM15 13h3v5h-3z" fill="#ddd" stroke="none" /><path d="M4 8l4-3 3 4 5-4" stroke="#fff" strokeWidth="1.500" /></> },
  { name: "Photoshop", open: true, art: <><path d="M1 2h18v15H1z" fill="#3a80d0" stroke="#74b0f0" /><path d="M6 14V6h2.500a2.300 2.300 0 0 1 0 4.600H6M15 9c-3-1.500-4 1.500-2 2s1 3-2 2" stroke="#0c2850" strokeWidth="1.400" /></> },
  { name: "Rhinoceros", open: true, active: true, art: rhinoArt },
  { name: "Camtasia", open: true, art: <><path d="M1 1h18v17H1z" fill="#6aa820" stroke="none" /><path d="M14 6H7v8h7" stroke="#fff" strokeWidth="2.500" /></> },
  { name: "Camtasia Recorder", open: true, art: <><path d="M1 1h18v17H1z" fill="#f4f4f4" stroke="none" /><path d="M14 6H7v8h7" stroke="#333" strokeWidth="2" /></> },
];

const tray: IconDef[] = [
  { name: "Updates", art: <><path d="M10 1l8 4v9l-8 5-8-5V5z" fill="#f0b890" stroke="none" /><circle cx="10" cy="10" r="4" fill="#fff" stroke="#e07840" strokeWidth="2" /></> },
  { name: "Dropbox", art: <path d="M6 2l4 3-4 3-4-3zM14 2l4 3-4 3-4-3zM6 8l4 3-4 3-4-3zM14 8l4 3-4 3-4-3zM10 13l4 2-4 3-4-3z" fill="#eee" stroke="none" /> },
  { name: "Defender", art: <><path d="M10 1l7 3c0 7-2 11-7 14C5 15 3 11 3 4z" fill="#eee" stroke="none" /><path d="M10 1v17M3 8h14" /><circle cx="15" cy="15" r="4.500" fill="#c81838" stroke="none" /><path d="M13 13l4 4M17 13l-4 4" stroke="#fff" /></> },
  { name: "Antivirus", art: <><path d="M3 2h14v15H3z" fill="#b82040" stroke="none" /><path d="M4 15L14 3M5 4l9 9" stroke="#eee" strokeWidth="2.500" /><path d="M10 11h8v7h-8z" fill="#ddd" stroke="none" /></> },
  { name: "USB", art: <path d="M7 2h6v5H7zM5 7h10v11H5zM15 17l3-2" stroke="#ccc" strokeWidth="1.500" /> },
  { name: "Power", art: <><path d="M0 0h20v19H0z" fill="#e08028" stroke="none" /><path d="M11 3l-4 7h6l-4 6M5 17h10" stroke="#fff" strokeWidth="2" /></> },
  { name: "OneDrive", art: <path d="M3 16a4 4 0 0 1 1-7 5 5 0 0 1 9-2 5 5 0 0 1 4 9z" fill="#999" stroke="none" /> },
  { name: "Drive", art: <><path d="M10 2L2 17h5l5-9z" fill="#408848" stroke="none" /><path d="M10 2l9 15h-5L8 6z" fill="#c8b040" stroke="none" /><path d="M3 17h14v-3H5z" fill="#4068c0" stroke="none" /><path d="M10 6v6M10 13v2" stroke="#fff" strokeWidth="2" /></> },
  { name: "Creative Cloud", art: <><circle cx="10" cy="10" r="9" fill="#c82838" stroke="none" /><path d="M9 5c-6 0-6 9 0 9M10 6l2 8 2-6 2 6" stroke="#fff" strokeWidth="1.800" /></> },
  { name: "Devices", art: <><path d="M3 2h10l4 5-4 4-2 7-5-5z" fill="#b8c8d0" stroke="none" /><circle cx="15" cy="15" r="3.500" fill="#d02828" stroke="none" /></> },
  { name: "Storage", art: <><path d="M1 8l4-5h12l2 5v7H1z" fill="#c8d0c8" stroke="none" /><path d="M8 12l4 4 6-7" stroke="#38a838" strokeWidth="3" /></> },
  { name: "Pen", art: <><path d="M3 3l8 5 1 6-6 3z" stroke="#ccc" strokeWidth="1.800" /><path d="M12 4c4 3 5 7 6 13l-6-3" stroke="#999" strokeWidth="1.800" /></> },
  { name: "Network", art: <path d="M6 4h13v9H6zM10 17h6M13 13v4M1 3h4v5H1zM3 8v9h4" stroke="#ccc" strokeWidth="1.500" /> },
  { name: "Volume", art: <path d="M1 7h4l5-4v14l-5-4H1zM13 7q2 3 0 6M16 5q3 5 0 10" stroke="#ccc" strokeWidth="1.500" /> },
];

export default function App() {
  return (
    <div className="flex h-screen min-h-[700px] flex-col overflow-hidden bg-[#e9e9ee] font-['Roboto','Open_Sans',sans-serif] text-[10px] text-[#2c2c30]">
      <header className="bg-[#fefefe]">
        <div className="flex h-[20px] items-center">
          <svg className="ml-px" width="14" height="14" viewBox="0 0 20 20" aria-hidden="true">
            <path d="M0 0h20v20H0z" fill="#222" />
            <path d="M2 9l4-6 3 3 5-4 1 6 4 2-4 8-6-3-3 3z" fill="#999" />
            <path d="M4 8l4 3M11 7l3 4-4 3" stroke="#eee" strokeWidth="2" fill="none" />
          </svg>
          <h1 className="ml-[3px]">20171231_Transitional_Surfaces.3dm (1020 KB) - Rhinoceros BETA - [Perspective]</h1>
          <div className="ml-auto flex h-full">
            <button aria-label="Minimize" className="grid w-[38px] place-items-center">
              <svg width="10" height="10" viewBox="0 0 10 10" stroke="#333"><path d="M1 5.500h8" /></svg>
            </button>
            <button aria-label="Restore" className="grid w-[38px] place-items-center">
              <svg width="10" height="10" viewBox="0 0 10 10" fill="none" stroke="#333"><path d="M1.500 3.500h5v5h-5zM3.500 3V1.500h5v5H7" /></svg>
            </button>
            <button aria-label="Close" className="grid w-[34px] place-items-center">
              <svg width="10" height="10" viewBox="0 0 10 10" stroke="#333"><path d="M1 1l8 8M9 1L1 9" /></svg>
            </button>
          </div>
        </div>
        <nav className="flex h-[17px] items-center gap-[11px] pl-[5px]" aria-label="Main menu">
          {menus.map((m) => (
            <button key={m}>{m}</button>
          ))}
        </nav>
      </header>

      <section className="border-t-2 border-[#ededf0] pl-[4px]" aria-label="Command">
        <div className="flex border-l border-[#d8d8de] bg-white">
          <div className="flex h-[63px] flex-1 flex-col justify-between pt-[2px] pl-px leading-[12px] whitespace-pre">
            {history.map((h, i) => (
              <p key={i}>{h}</p>
            ))}
          </div>
          <div className="flex w-[9px] flex-col items-center justify-between bg-[#f0f0f0] py-[4px]">
            <svg width="7" height="6" viewBox="0 0 7 6" fill="none" stroke="#333" strokeWidth="1.500"><path d="M1 5l3-3 3 3" /></svg>
            <div className="mt-[20px] h-[14px] w-full bg-[#cdcdcd]" />
            <svg width="7" height="6" viewBox="0 0 7 6" fill="none" stroke="#333" strokeWidth="1.500"><path d="M1 1l3 3 3-3" /></svg>
          </div>
        </div>
        <div className="flex h-[16px] items-center border-t border-l border-[#d8d8de] bg-white">
          <label htmlFor="cmd" className="pl-px font-bold">Command:</label>
          <input id="cmd" className="ml-[3px] h-[12px] flex-1 border-l border-black bg-transparent pl-[2px] outline-none" />
          <svg width="9" height="14" viewBox="0 0 9 14" aria-hidden="true"><path d="M0 0h9v14H0z" fill="#e8e8ea" /><path d="M2 5l3-3 3 3zM2 9l3 3 3-3z" fill="#333" /><path d="M0 7h9" stroke="#aaa" /></svg>
        </div>
      </section>

      <section className="h-[71px] shrink-0 border-t-2 border-[#f4f4f7] pt-[4px]" aria-label="Toolbars">
        <div className="flex h-[16px] items-stretch bg-[#e6e6ea] pl-[6px]" role="tablist">
          {toolTabs.map((t, i) => (
            <button key={t} role="tab" aria-selected={i === 0} className={`mr-[2px] rounded-t-[6px] px-[7px] ${i === 0 ? "bg-[#ececf1]" : "bg-[#dadade]"}`}>
              {t}
            </button>
          ))}
          <button className="ml-auto w-[10px] overflow-hidden" aria-label="Toolbar options">
            <Icon art={gearArt} size={15} />
          </button>
        </div>
        <div className="flex w-[774px] justify-between pt-[2px] pl-[5px]">
          {toolbar.map((t) => (
            <button key={t.name} aria-label={t.name} className="w-[20px]">
              <Icon art={t.art} fly={t.fly} size={19} />
            </button>
          ))}
        </div>
      </section>

      <main className="flex min-h-0 flex-1">
        <div className="w-[53px] shrink-0 border-r border-[#f4f4f8] bg-[#ededf2] pt-[6px]">
          <div className="grid h-[419px] grid-cols-2 content-between justify-items-center border-t border-[#d8d8dd] pr-[6px]">
            {sideTools.map((t) => (
              <button key={t.name} aria-label={t.name} className="w-[19px]">
                <Icon art={t.art} fly={t.fly} size={19} />
              </button>
            ))}
          </div>
        </div>

        <div className="flex min-w-0 flex-1 flex-col">
          <div className="relative min-h-0 flex-1 overflow-hidden bg-[#9fa1aa]">
            <div className="absolute inset-0">
              <Scene />
            </div>
            <button className="absolute top-px left-px flex h-[13px] items-center gap-[5px] bg-[#919dbb] px-[5px] font-bold text-[#0c1034]">
              Perspective
              <span className="flex items-center border-l border-[#0c1034] pl-px">
                <svg width="7" height="11" viewBox="0 0 7 11" aria-hidden="true"><path d="M0 4h7L3.500 8z" fill="#0c1034" /></svg>
              </span>
            </button>
            <div className="absolute top-[5px] right-[5px] h-[12px] w-[39px] bg-[#1c04e8] text-center leading-[11px] text-[#d8d4ff]">Top</div>
          </div>
          <div className="flex h-[18px] shrink-0 items-stretch" role="tablist" aria-label="Viewports">
            <button role="tab" aria-selected="true" className="bg-[#f0f0f4] pr-[5px] pl-[7px]">Perspective</button>
            <button role="tab" className="mb-[2px] border-r border-[#ececf0] bg-[#d9d9dd] px-[6px] pt-[2px]">Top</button>
            <button role="tab" className="mb-[2px] border-r border-[#ececf0] bg-[#d9d9dd] px-[5px] pt-[2px]">Front</button>
            <button role="tab" className="mb-[2px] bg-[#d9d9dd] px-[6px] pt-[2px]">Right</button>
            <button aria-label="Add viewport" className="grid w-[22px] place-items-center border-r border-[#dcdce0]">
              <svg width="9" height="9" viewBox="0 0 9 9" fill="#fff" stroke="#777"><path d="M3.500.5h2v3h3v2h-3v3h-2v-3h-3v-2h3z" /></svg>
            </button>
          </div>
          <div className="h-[3px] shrink-0" />
        </div>
        <div className="w-[6px] shrink-0" />
        <LayersPanel />
      </main>

      <section className="flex h-[18px] shrink-0 items-center pl-[7px]" aria-label="Object snaps">
        {snaps.map((s, i) => (
          <label key={s} className={`flex items-center gap-[2px] ${i >= 11 ? "mr-[12px]" : "mr-[6px]"}`}>
            <span className="grid">
              <input type="checkbox" defaultChecked={i < 11} className={`peer h-[11px] w-[11px] appearance-none border [grid-area:1/1] ${i < 11 ? "border-[#444] bg-white" : "border-[#c4c4c8] bg-[#e4e4e7]"}`} />
              <svg className="pointer-events-none hidden [grid-area:1/1] peer-checked:block" width="11" height="11" viewBox="0 0 11 11" fill="none" stroke="#333" strokeWidth="1.200"><path d="M2.500 5.500l2 2.500 4.500-5.500" /></svg>
            </span>
            {s}
          </label>
        ))}
      </section>

      <footer className="flex h-[17px] shrink-0 items-stretch border-t border-[#dadadf] bg-[#ebebef]">
        {panes.map((p) => (
          <div key={p.text} className={`flex items-center border-r border-[#dcdce1] whitespace-nowrap ${p.cls}`}>
            {p.swatch && <span className="mr-px h-[12px] w-[12px] bg-black" />}
            {p.text}
          </div>
        ))}
      </footer>

      <div className="flex h-[26px] shrink-0 items-stretch bg-black text-white">
        <div className="flex w-[430px] justify-between">
          {taskApps.map((a) => (
            <button key={a.name} aria-label={a.name} className={`flex w-[29px] items-center justify-center border-b-2 ${a.open ? "border-[#7fa8e0]" : "border-transparent"} ${a.active ? "bg-[#3a3a3e]" : ""}`}>
              <Icon art={a.art} size={14} />
            </button>
          ))}
        </div>
        <div className="ml-auto flex items-center">
          {tray.map((t) => (
            <button key={t.name} aria-label={t.name} className="grid w-[20px] place-items-center">
              <Icon art={t.art} size={13} />
            </button>
          ))}
          <span className="w-[30px] text-center">ENG</span>
          <time className="w-[54px] text-center">11:07 PM</time>
          <button aria-label="Notifications" className="mr-[7px] grid w-[30px] place-items-center">
            <svg width="14" height="14" viewBox="0 0 14 14"><path d="M0 0h14v10H9v4l-4-4H0z" fill="#fff" /><path d="M3 3h8M3 5h8M3 7h5" stroke="#555" /></svg>
          </button>
        </div>
      </div>
    </div>
  );
}
